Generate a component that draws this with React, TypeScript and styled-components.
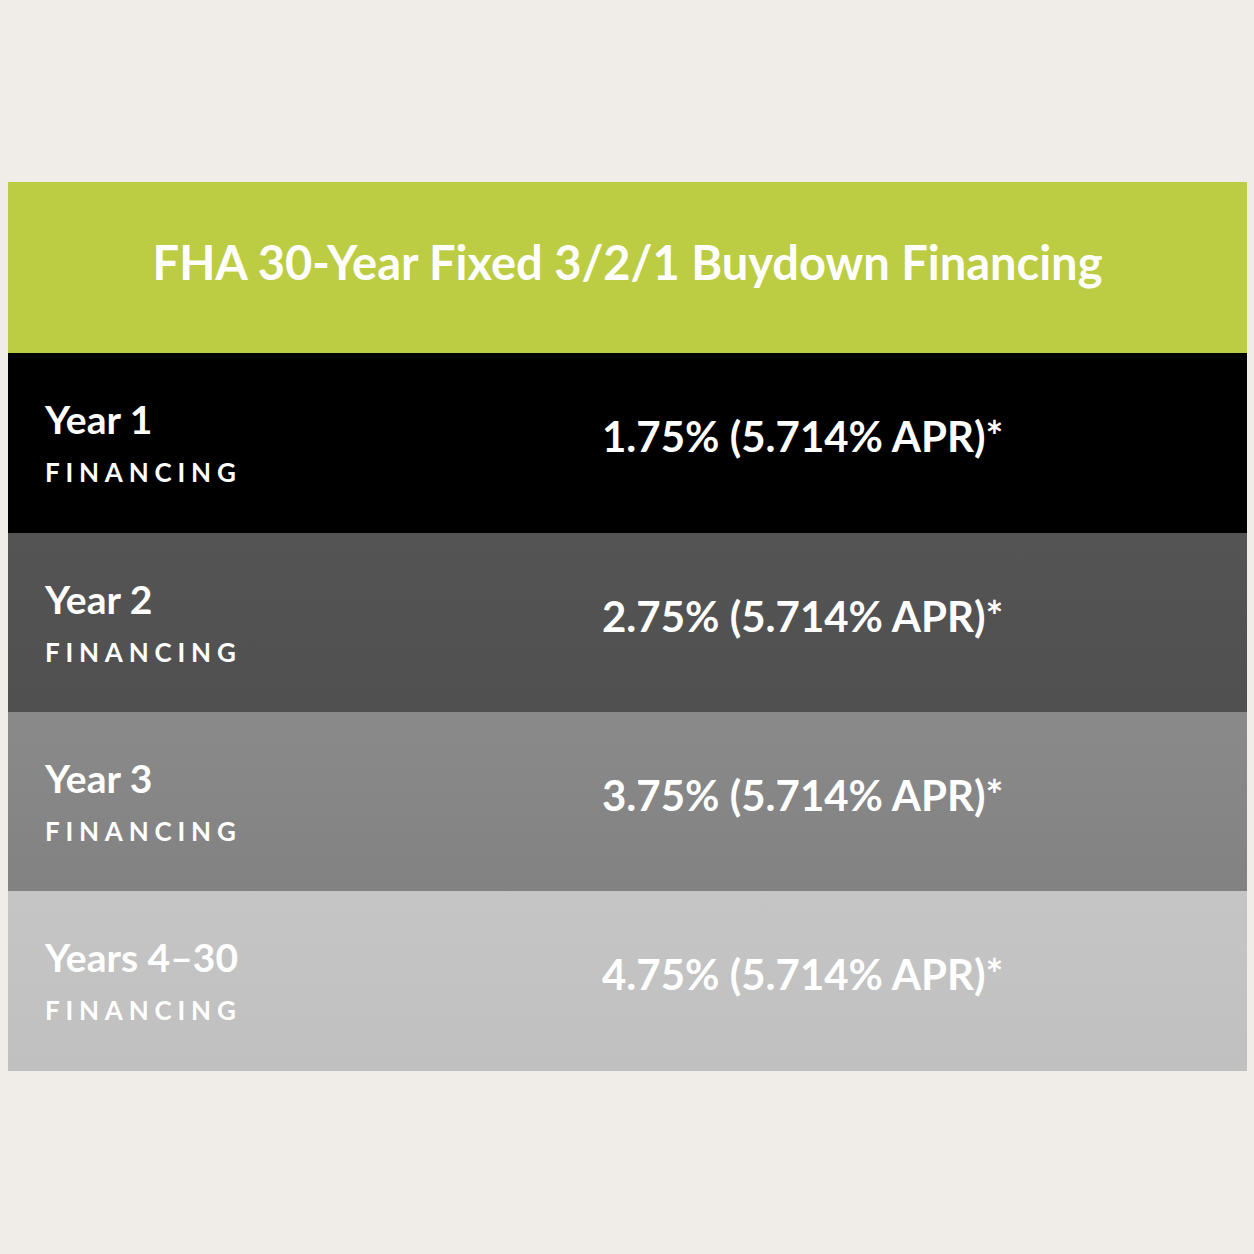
import React from "react";
import styled, { createGlobalStyle } from "styled-components";

const GlobalStyle = createGlobalStyle`
  html, body {
    margin: 0;
    padding: 0;
    background: #f0ede9;
  }
  body {
    padding: 182px 7px 0 8px;
    font-family: Lato, "Open Sans", "Liberation Sans", sans-serif;
    -webkit-font-smoothing: antialiased;
  }
`;

const Table = styled.section`
  display: flex;
  flex-direction: column;
  width: 100%;
`;

const Header = styled.header`
  height: 171px;
  background: #bccc43;
  display: flex;
  align-items: center;
  justify-content: center;
`;

const Title = styled.h1`
  margin: 0 0 12px 0;
  color: #ffffff;
  font-size: 47px;
  line-height: 56px;
  font-weight: 700;
  letter-spacing: 0;
`;

const Row = styled.div<{ $bg: string; $h: number }>`
  display: grid;
  grid-template-columns: 594px 1fr;
  align-items: center;
  height: ${(p) => p.$h}px;
  background: ${(p) => p.$bg};
  color: #ffffff;
`;

const LabelCell = styled.div`
  display: flex;
  flex-direction: column;
  padding-left: 37px;
`;

const Year = styled.span`
  font-size: 39px;
  font-weight: 700;
  line-height: 44px;
`;

const Sub = styled.span`
  font-size: 26px;
  font-weight: 700;
  letter-spacing: 5.8px;
  line-height: 34px;
  margin-top: 14px;
`;

const Value = styled.div`
  font-size: 42px;
  font-weight: 700;
  line-height: 46px;
  margin-bottom: 14px;
`;

const rows = [
  { label: "Year 1", value: "1.75% (5.714% APR)*", bg: "#000000", h: 180 },
  { label: "Year 2", value: "2.75% (5.714% APR)*", bg: "linear-gradient(180deg, #545454 0%, #505050 100%)", h: 179 },
  { label: "Year 3", value: "3.75% (5.714% APR)*", bg: "linear-gradient(180deg, #8a8a8a 0%, #828282 100%)", h: 179 },
  { label: "Years 4–30", value: "4.75% (5.714% APR)*", bg: "linear-gradient(180deg, #c5c5c5 0%, #c0c0c0 100%)", h: 180 },
];

export default function App() {
  return (
    <>
      <GlobalStyle />
      <Table>
        <Header>
          <Title>FHA 30-Year Fixed 3/2/1 Buydown Financing</Title>
        </Header>
        {rows.map((r) => (
          <Row key={r.label} $bg={r.bg} $h={r.h}>
            <LabelCell>
              <Year>{r.label}</Year>
              <Sub>FINANCING</Sub>
            </LabelCell>
            <Value>{r.value}</Value>
          </Row>
        ))}
      </Table>
    </>
  );
}
